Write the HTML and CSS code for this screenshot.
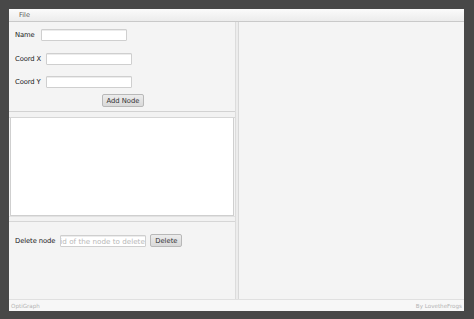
FILE: index.html
```html
<!DOCTYPE html>
<html>
<head>
<meta charset="utf-8">
<link rel="stylesheet" href="styles.css">
</head>
<body>
<div class="window">
  <div class="menubar"><span class="menu">File</span></div>
  <div class="main">
    <div class="left">
      <div class="form">
        <div class="row r1"><span class="label">Name</span><div class="field f1"></div></div>
        <div class="row r2"><span class="label">Coord X</span><div class="field f2"></div></div>
        <div class="row r3"><span class="label">Coord Y</span><div class="field f2"></div></div>
        <div class="btnrow"><div class="btn add">Add Node</div></div>
      </div>
      <div class="hdivider"></div>
      <div class="listwrap"><div class="list"></div></div>
      <div class="hdivider d2"></div>
      <div class="delete">
        <span class="label">Delete node</span>
        <div class="field f3"><span class="ph">id of the node to delete</span></div>
        <div class="btn del">Delete</div>
      </div>
    </div>
    <div class="vdivider"></div>
    <div class="right"></div>
  </div>
  <div class="status"><span>OptiGraph</span><span>By LovetheFrogs</span></div>
</div>
</body>
</html>
```

FILE: styles.css
```css
html, body {
  margin: 0;
  padding: 0;
  background: #484848;
  width: 474px;
  height: 319px;
  overflow: hidden;
  font-family: "DejaVu Sans", sans-serif;
}
.window {
  margin: 9px 0 0 9px;
  width: 455px;
  height: 302px;
  background: #f4f4f4;
  display: flex;
  flex-direction: column;
}
.menubar {
  height: 12px;
  background: linear-gradient(#fbfbfb, #ececec);
  border-bottom: 1px solid #c9c9c9;
  display: flex;
  align-items: center;
}
.menu {
  margin-left: 10px;
  font-size: 6.5px;
  color: #555;
}
.main {
  flex: 1;
  display: flex;
  min-height: 0;
}
.left {
  width: 226px;
  display: flex;
  flex-direction: column;
}
.form {
  height: 89px;
  display: flex;
  flex-direction: column;
  padding-left: 6px;
  border-bottom: 1px solid #d2d2d2;
}
.label {
  font-size: 6.8px;
  color: #222;
  letter-spacing: -0.1px;
}
.row {
  display: flex;
  align-items: center;
  height: 12px;
}
.r1 { margin-top: 7px; }
.r2 { margin-top: 12px; }
.r3 { margin-top: 11px; }
.field {
  height: 10px;
  background: #fff;
  border: 1px solid #cfcfcf;
  border-radius: 1px;
  box-shadow: inset 0 1px 0 #ececec;
}
.f1 { width: 84px; margin-left: 6px; }
.f2 { width: 84px; margin-left: 5px; }
.btnrow {
  display: flex;
  margin-top: 6px;
  padding-left: 87px;
}
.btn {
  height: 11px;
  border: 1px solid #b8b8b8;
  border-radius: 2px;
  background: linear-gradient(#ececec, #d9d9d9);
  font-size: 6.8px;
  color: #333;
  display: flex;
  align-items: center;
  justify-content: center;
}
.add { width: 40px; }
.hdivider {
  height: 5px;
  background: #f2f2f2;
  border-bottom: 1px solid #d6d6d6;
}
.listwrap {
  height: 98px;
  padding: 0 1px;
  display: flex;
}
.list {
  flex: 1;
  background: #fff;
  border: 1px solid #cfcfcf;
  border-top: none;
}
.d2 {
  border-top: 1px solid #e2e2e2;
  height: 4px;
}
.delete {
  flex: 1;
  display: flex;
  align-items: flex-start;
  padding: 12px 0 0 6px;
}
.delete .label { margin-top: 3px; }
.f3 {
  width: 84px;
  margin-left: 5px;
  margin-top: 1px;
  overflow: hidden;
  white-space: nowrap;
  display: flex;
  align-items: center;
}
.ph {
  font-size: 7.2px;
  color: #b8b8b8;
  margin-left: -1px;
}
.del { width: 30px; margin-left: 4px; height: 11px; }
.vdivider {
  width: 2px;
  background: #ececec;
  border-left: 1px solid #dcdcdc;
  border-right: 1px solid #d8d8d8;
}
.right {
  flex: 1;
  background: #f4f4f4;
}
.status {
  height: 11px;
  border-top: 1px solid #e0e0e0;
  background: #f7f7f7;
  display: flex;
  justify-content: space-between;
  align-items: center;
  padding: 0 2px;
  font-size: 5.6px;
  color: #b4b4b4;
}
```
